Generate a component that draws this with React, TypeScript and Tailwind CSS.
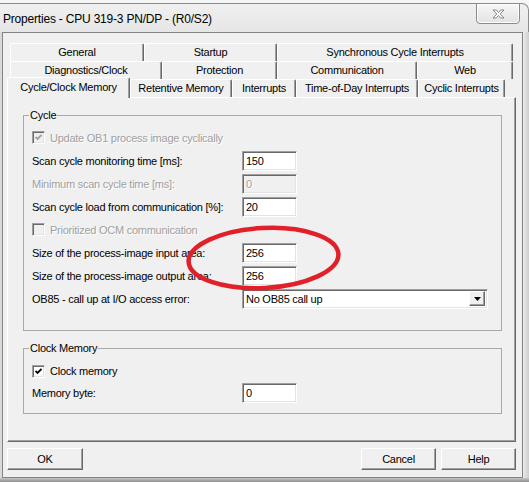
import React from 'react';

const sunken =
  'border border-t-[#a0a0a0] border-l-[#a0a0a0] border-b-white border-r-white shadow-[inset_1px_1px_0_#696969,inset_-1px_-1px_0_#e3e3e3]';
const raised =
  'border border-t-white border-l-white border-b-[#696969] border-r-[#696969] shadow-[inset_-1px_-1px_0_#a0a0a0]';
const dim = 'text-[#a0a0a0] [text-shadow:1px_1px_0_#fff]';
const tabEdge =
  'border-t border-l border-r border-t-white border-l-white border-r-[#696969] shadow-[inset_-1px_0_0_#a0a0a0] rounded-t-[2px]';

const row1 = [
  { label: 'General', w: 'w-[134px]' },
  { label: 'Startup', w: 'w-[133px]' },
  { label: 'Synchronous Cycle Interrupts', w: 'w-[236px]' },
];
const row2 = [
  { label: 'Diagnostics/Clock', w: 'w-[152px]' },
  { label: 'Protection', w: 'w-[115px]' },
  { label: 'Communication', w: 'w-[140px]' },
  { label: 'Web', w: 'w-[96px]' },
];
const row3 = [
  { label: 'Retentive Memory', w: 'w-[102px]' },
  { label: 'Interrupts', w: 'w-[64px]' },
  { label: 'Time-of-Day Interrupts', w: 'w-[122px]' },
  { label: 'Cyclic Interrupts', w: 'w-[87px]' },
];

function Check({ checked, disabled }: { checked: boolean; disabled?: boolean }) {
  return (
    <span
      className={`w-[13px] h-[13px] shrink-0 flex items-center justify-center ${sunken} ${
        disabled ? 'bg-[#f0f0f0]' : 'bg-white'
      }`}
    >
      {checked && (
        <svg width="7" height="7" viewBox="0 0 7 7">
          <polyline
            points="0.5,3 2.5,5 6.5,1"
            fill="none"
            stroke={disabled ? '#a0a0a0' : '#000'}
            strokeWidth="1.8"
          />
        </svg>
      )}
    </span>
  );
}

function CheckRow({ label, checked, disabled, h }: { label: string; checked: boolean; disabled?: boolean; h: string }) {
  return (
    <div className={`${h} flex items-center gap-[5px]`}>
      <Check checked={checked} disabled={disabled} />
      <span className={disabled ? dim : ''}>{label}</span>
    </div>
  );
}

function Field({ label, value, disabled, h = 'h-[23px]' }: { label: string; value: string; disabled?: boolean; h?: string }) {
  return (
    <div className={`${h} flex items-center`}>
      <span className={`w-[210px] ${disabled ? dim : ''}`}>{label}</span>
      <div
        className={`w-[55px] h-[20px] pl-[3px] flex items-center ${sunken} ${
          disabled ? 'bg-[#f0f0f0] ' + dim : 'bg-white'
        }`}
      >
        {value}
      </div>
    </div>
  );
}

function Button({ label, className }: { label: string; className?: string }) {
  return (
    <div className={`w-[75px] h-[22px] flex items-center justify-center bg-[#f0f0f0] ${raised} ${className || ''}`}>
      {label}
    </div>
  );
}

export default function App() {
  return (
    <div className="relative w-[529px] h-[482px] overflow-hidden bg-[#d9d9d9] font-['Liberation_Sans',Arial,sans-serif] text-[11px] leading-[14px] tracking-[-0.25px] text-black">
      {/* title bar */}
      <div className="h-[32px] pt-[3px] bg-[#f6f6f6]">
        <div className="h-[29px] flex items-start border-t border-r border-[#8c8c8c] rounded-tr-[7px] bg-[linear-gradient(#f0f0f0,#e6e6e6)]">
          <span className="pl-[3px] pt-[7px] text-[12px] leading-[16px] tracking-[-0.2px]">
            Properties - CPU 319-3 PN/DP - (R0/S2)
          </span>
          <div className="ml-auto mr-[8px] -mt-px w-[44px] h-[21px] flex items-center justify-center border border-[#8a8a8a] rounded-b-[4px] bg-[linear-gradient(#f7f7f7,#e2e2e2)] shadow-[inset_0_0_0_1px_#fff]">
            <svg width="13" height="10" viewBox="0 0 13 10">
              <path
                d="M1 1 H4.3 L6.5 3.6 L8.7 1 H12 L8.2 5 L12 9 H8.7 L6.5 6.4 L4.3 9 H1 L4.8 5 Z"
                fill="#fff"
                stroke="#7a7a7a"
                strokeWidth="0.9"
              />
            </svg>
          </div>
        </div>
      </div>

      {/* window body */}
      <div className="flex pl-[2px]">
        <div className="w-[521px] h-[446px] border border-[#838383] bg-[#f0f0f0] pt-[10px] pl-[4px] pr-[6px] pb-[6px] flex flex-col">
          {/* tab rows */}
          <div className="flex h-[18px] pl-[3px]">
            {row1.map((t) => (
              <div key={t.label} className={`${t.w} h-[18px] pb-px ${tabEdge} flex items-center justify-center`}>
                {t.label}
              </div>
            ))}
          </div>
          <div className="flex h-[18px] pl-[3px]">
            {row2.map((t) => (
              <div key={t.label} className={`${t.w} h-[18px] pb-[2px] ${tabEdge} flex items-center justify-center`}>
                {t.label}
              </div>
            ))}
          </div>
          <div className="flex h-[18px] items-start">
            <div
              className={`relative z-10 w-[123px] h-[21px] -mt-[2px] pb-[2px] bg-[#f0f0f0] ${tabEdge} flex items-center justify-center`}
            >
              Cycle/Clock Memory
            </div>
            {row3.map((t) => (
              <div key={t.label} className={`${t.w} h-[18px] pb-[2px] ${tabEdge} flex items-center justify-center`}>
                {t.label}
              </div>
            ))}
          </div>

          {/* tab panel */}
          <div className="h-[345px] border border-t-white border-l-white border-r-[#696969] border-b-[#696969] shadow-[inset_-1px_-1px_0_#a0a0a0] pt-[10px] pl-[15px]">
            <fieldset className="w-[479px] border border-[#a9a9a9] pl-[8px] pt-[4px] pb-[20px]">
              <legend className="-ml-[3px] px-[1px]">Cycle</legend>
              <CheckRow h="h-[23px]" label="Update OB1 process image cyclically" checked disabled />
              <Field label="Scan cycle monitoring time [ms]:" value="150" />
              <Field label="Minimum scan cycle time [ms]:" value="0" disabled />
              <Field label="Scan cycle load from communication [%]:" value="20" />
              <CheckRow h="h-[23px]" label="Prioritized OCM communication" checked={false} disabled />
              <Field label="Size of the process-image input area:" value="256" />
              <Field label="Size of the process-image output area:" value="256" />
              <div className="h-[23px] flex items-center">
                <span className="w-[210px]">OB85 - call up at I/O access error:</span>
                <div className={`w-[246px] h-[20px] pl-[3px] pr-[2px] flex items-center bg-white ${sunken}`}>
                  <span className="flex-1">No OB85 call up</span>
                  <div className={`w-[16px] h-[15px] flex items-center justify-center bg-[#f0f0f0] ${raised}`}>
                    <svg width="7" height="4" viewBox="0 0 7 4">
                      <path d="M0 0 H7 L3.5 4 Z" fill="#000" />
                    </svg>
                  </div>
                </div>
              </div>
            </fieldset>

            <fieldset className="mt-[10px] w-[479px] border border-[#a9a9a9] pl-[8px] pt-[5px] pb-[10px]">
              <legend className="-ml-[3px] px-[1px]">Clock Memory</legend>
              <CheckRow h="h-[22px]" label="Clock memory" checked />
              <Field h="h-[21px]" label="Memory byte:" value="0" />
            </fieldset>
          </div>

          {/* buttons */}
          <div className="mt-[6px] flex">
            <Button label="OK" className="w-[76px]" />
            <Button label="Cancel" className="ml-auto" />
            <Button label="Help" className="ml-[5px]" />
          </div>
        </div>
        <div className="flex-1 bg-[linear-gradient(to_right,#ececec,#cdcdcd)]" />
      </div>
      <div className="h-[4px] bg-[linear-gradient(#c6c6c6,#8e8e8e)]" />

      {/* red marker drawn over the screenshot */}
      <svg className="absolute left-0 top-0 pointer-events-none" width="529" height="482">
        <ellipse
          cx="263.5"
          cy="258"
          rx="75"
          ry="30"
          transform="rotate(-3 263.5 258)"
          fill="none"
          stroke="#e2202a"
          strokeWidth="4.5"
        />
      </svg>
    </div>
  );
}
